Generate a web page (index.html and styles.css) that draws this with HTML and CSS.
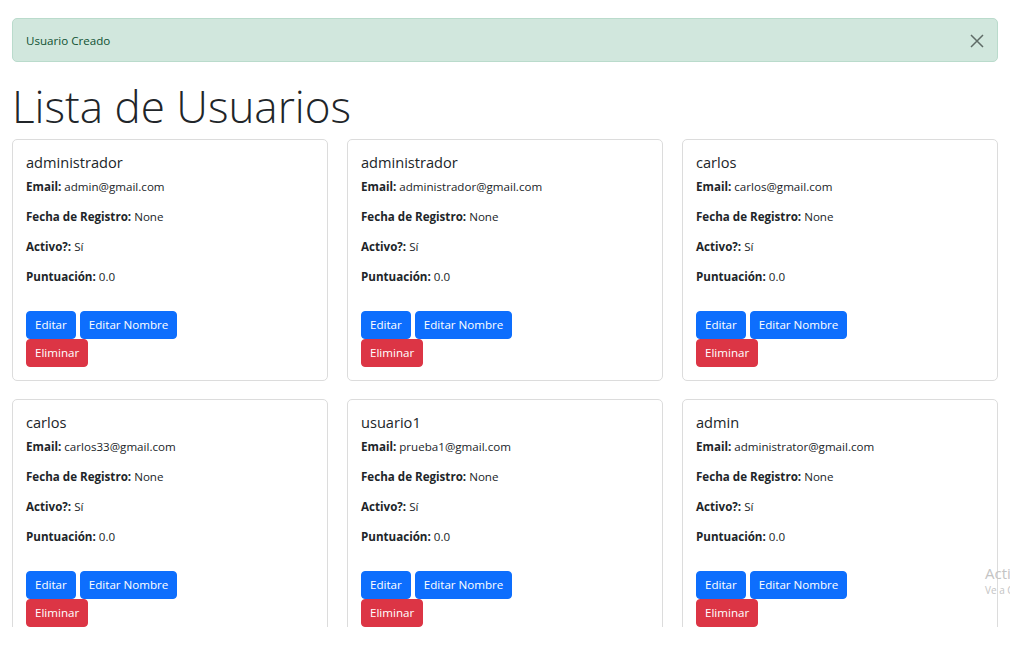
FILE: index.html
```html
<!DOCTYPE html>
<html lang="es">
<head>
<meta charset="utf-8">
<title>Lista de Usuarios</title>
<link rel="stylesheet" href="styles.css">
</head>
<body>
<div class="viewport">
  <div class="page">
    <div class="alert">
      <span>Usuario Creado</span>
      <button class="close" aria-label="Cerrar">
        <svg width="14" height="14" viewBox="0 0 14 14"><path d="M1 1L13 13M13 1L1 13" stroke="#5f6b66" stroke-width="1.5" fill="none"/></svg>
      </button>
    </div>
    <h1 class="title">Lista de Usuarios</h1>
    <div class="grid">
      <div class="card">
        <h5 class="card-title">administrador</h5>
        <p><strong>Email:</strong> admin@gmail.com</p>
        <p><strong>Fecha de Registro:</strong> None</p>
        <p><strong>Activo?:</strong> Sí</p>
        <p><strong>Puntuación:</strong> 0.0</p>
        <div class="actions">
          <div class="btn-row"><a class="btn btn-primary">Editar</a><a class="btn btn-primary">Editar Nombre</a></div>
          <div class="btn-row"><button class="btn btn-danger">Eliminar</button></div>
        </div>
      </div>
      <div class="card">
        <h5 class="card-title">administrador</h5>
        <p><strong>Email:</strong> administrador@gmail.com</p>
        <p><strong>Fecha de Registro:</strong> None</p>
        <p><strong>Activo?:</strong> Sí</p>
        <p><strong>Puntuación:</strong> 0.0</p>
        <div class="actions">
          <div class="btn-row"><a class="btn btn-primary">Editar</a><a class="btn btn-primary">Editar Nombre</a></div>
          <div class="btn-row"><button class="btn btn-danger">Eliminar</button></div>
        </div>
      </div>
      <div class="card">
        <h5 class="card-title">carlos</h5>
        <p><strong>Email:</strong> carlos@gmail.com</p>
        <p><strong>Fecha de Registro:</strong> None</p>
        <p><strong>Activo?:</strong> Sí</p>
        <p><strong>Puntuación:</strong> 0.0</p>
        <div class="actions">
          <div class="btn-row"><a class="btn btn-primary">Editar</a><a class="btn btn-primary">Editar Nombre</a></div>
          <div class="btn-row"><button class="btn btn-danger">Eliminar</button></div>
        </div>
      </div>
      <div class="card">
        <h5 class="card-title">carlos</h5>
        <p><strong>Email:</strong> carlos33@gmail.com</p>
        <p><strong>Fecha de Registro:</strong> None</p>
        <p><strong>Activo?:</strong> Sí</p>
        <p><strong>Puntuación:</strong> 0.0</p>
        <div class="actions">
          <div class="btn-row"><a class="btn btn-primary">Editar</a><a class="btn btn-primary">Editar Nombre</a></div>
          <div class="btn-row"><button class="btn btn-danger">Eliminar</button></div>
        </div>
      </div>
      <div class="card">
        <h5 class="card-title">usuario1</h5>
        <p><strong>Email:</strong> prueba1@gmail.com</p>
        <p><strong>Fecha de Registro:</strong> None</p>
        <p><strong>Activo?:</strong> Sí</p>
        <p><strong>Puntuación:</strong> 0.0</p>
        <div class="actions">
          <div class="btn-row"><a class="btn btn-primary">Editar</a><a class="btn btn-primary">Editar Nombre</a></div>
          <div class="btn-row"><button class="btn btn-danger">Eliminar</button></div>
        </div>
      </div>
      <div class="card">
        <h5 class="card-title">admin</h5>
        <p><strong>Email:</strong> administrator@gmail.com</p>
        <p><strong>Fecha de Registro:</strong> None</p>
        <p><strong>Activo?:</strong> Sí</p>
        <p><strong>Puntuación:</strong> 0.0</p>
        <div class="actions">
          <div class="btn-row"><a class="btn btn-primary">Editar</a><a class="btn btn-primary">Editar Nombre</a></div>
          <div class="btn-row"><button class="btn btn-danger">Eliminar</button></div>
        </div>
      </div>
    </div>
  </div>
  <div class="watermark">
    <div class="wm-big">Activar Windows</div>
    <div class="wm-small">Ve a Configuración para activar Windows.</div>
  </div>
</div>
</body>
</html>
```

FILE: styles.css
```css
* { box-sizing: border-box; }
html, body { margin: 0; padding: 0; background: #fff; }
body {
  font-family: "Open Sans", "Noto Sans", "Liberation Sans", sans-serif;
  font-size: 11.6px;
  line-height: 18px;
  color: #212529;
}
.viewport {
  position: relative;
  height: 627px;
  overflow: hidden;
}
.page {
  padding: 18px 12px 0 12px;
}
.alert {
  display: flex;
  align-items: center;
  justify-content: space-between;
  height: 44px;
  padding: 2px 12px 0 13px;
  background: #d1e7dd;
  border: 1px solid #badbcc;
  border-radius: 5px;
  color: #0f5132;
}
.close {
  background: none;
  border: 0;
  padding: 0;
  width: 14px;
  height: 14px;
  display: flex;
  margin-right: 1px;
}
.title {
  font-size: 44px;
  font-weight: 300;
  line-height: 54px;
  margin: 17px 0 6px 0;
  color: #212529;
}
.grid {
  display: grid;
  grid-template-columns: repeat(3, 1fr);
  column-gap: 19px;
  row-gap: 18px;
}
.card {
  border: 1px solid #dcdcdc;
  border-radius: 5px;
  padding: 13px 12px 13px 13px;
  background: #fff;
}
.card-title {
  font-size: 14.6px;
  font-weight: 500;
  line-height: 18px;
  margin: 0 0 7px 0;
}
.card p {
  margin: 0 0 12px 0;
}
.card strong { font-weight: 700; }
.actions {
  margin-top: 25px;
}
.btn-row {
  display: flex;
  gap: 4px;
}
.btn {
  display: inline-block;
  font-family: inherit;
  font-size: 11.6px;
  line-height: 18px;
  padding: 4px 8px;
  border: 1px solid transparent;
  border-radius: 4px;
  color: #fff;
  cursor: pointer;
}
.btn-primary { background: #0d6efd; border-color: #0d6efd; }
.btn-danger { background: #dc3545; border-color: #dc3545; }
.watermark {
  position: absolute;
  left: 985px;
  top: 563px;
  white-space: nowrap;
  color: #c4c4c4;
}
.wm-big { font-size: 15px; line-height: 20px; }
.wm-small { font-size: 10px; line-height: 14px; }
```
